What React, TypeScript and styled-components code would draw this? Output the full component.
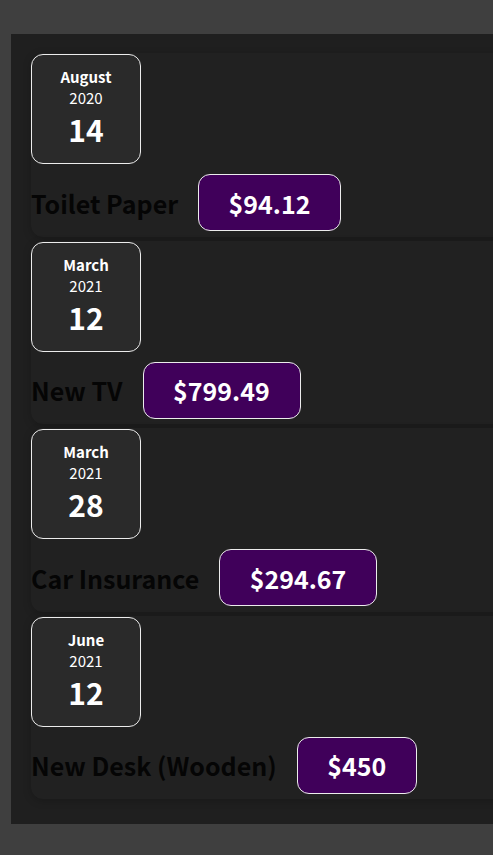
import styled, { createGlobalStyle } from "styled-components";

const GlobalStyle = createGlobalStyle`
  html, body {
    margin: 0;
    padding: 0;
    background: #3f3f3f;
    overflow: hidden;
    font-family: "Noto Sans CJK JP", "Noto Sans", sans-serif;
  }
`;

interface Expense {
  id: string;
  title: string;
  amount: string;
  month: string;
  year: string;
  day: string;
}

const expenses: Expense[] = [
  { id: "e1", title: "Toilet Paper", amount: "$94.12", month: "August", year: "2020", day: "14" },
  { id: "e2", title: "New TV", amount: "$799.49", month: "March", year: "2021", day: "12" },
  { id: "e3", title: "Car Insurance", amount: "$294.67", month: "March", year: "2021", day: "28" },
  { id: "e4", title: "New Desk (Wooden)", amount: "$450", month: "June", year: "2021", day: "12" },
];

const App = () => {
  return (
    <>
      <GlobalStyle />
      <Expenses>
        {expenses.map((e) => (
          <ExpenseItem key={e.id}>
            <DateBox>
              <Month>{e.month}</Month>
              <Year>{e.year}</Year>
              <Day>{e.day}</Day>
            </DateBox>
            <Description>
              <Title>{e.title}</Title>
              <Price>{e.amount}</Price>
            </Description>
          </ExpenseItem>
        ))}
      </Expenses>
    </>
  );
};

const Expenses = styled.div`
  margin: 34px 0 0 11px;
  padding: 19px 0 25px 20px;
  width: 620px;
  background-color: #1f1f1f;
  display: flex;
  flex-direction: column;
  gap: 4px;
`;

const ExpenseItem = styled.div`
  height: 183.5px;
  box-sizing: border-box;
  padding-top: 1px;
  background-color: #212121;
  border-radius: 12px;
  box-shadow: 0 2px 8px rgba(0, 0, 0, 0.2);
  display: flex;
  flex-direction: column;
`;

const DateBox = styled.div`
  width: 110px;
  height: 110px;
  box-sizing: border-box;
  border: 1px solid #ececec;
  border-radius: 12px;
  background-color: #2a2a2a;
  color: white;
  display: flex;
  flex-direction: column;
  align-items: center;
  padding-top: 11px;
`;

const Month = styled.div`
  font-size: 15px;
  font-weight: 700;
  line-height: 22px;
`;

const Year = styled.div`
  font-size: 15px;
  line-height: 19px;
`;

const Day = styled.div`
  font-size: 30px;
  font-weight: 700;
  line-height: 44px;
`;

const Description = styled.div`
  display: flex;
  align-items: center;
  gap: 20px;
  margin-top: 10px;
`;

const Title = styled.h2`
  margin: 0;
  font-size: 25px;
  font-weight: 700;
  color: #050505;
`;

const Price = styled.div`
  height: 57px;
  box-sizing: border-box;
  padding: 0 30px 0 29.5px;
  display: flex;
  align-items: center;
  font-size: 25px;
  font-weight: 700;
  color: white;
  background-color: #40005a;
  border: 1px solid #ececec;
  border-radius: 12px;
`;

export default App;
